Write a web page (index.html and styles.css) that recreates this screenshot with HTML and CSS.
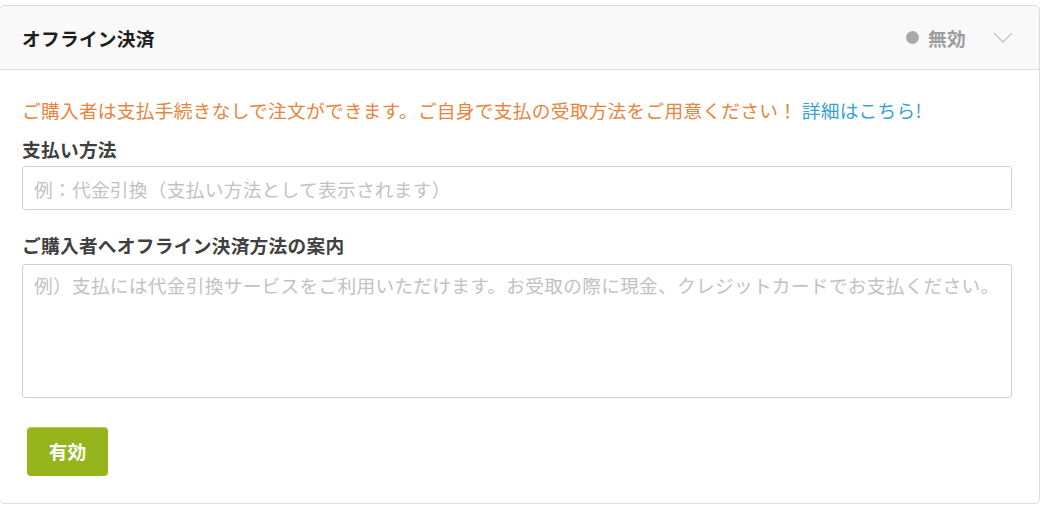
FILE: index.html
```html
<!DOCTYPE html>
<html lang="ja">
<head>
<meta charset="utf-8">
<link rel="stylesheet" href="styles.css">
</head>
<body>
<section class="card">
  <header class="card-head">
    <h2 class="card-title">オフライン決済</h2>
    <div class="status">
      <span class="dot"></span>
      <span class="status-text">無効</span>
      <svg class="chev" width="20" height="11" viewBox="0 0 20 11"><path d="M1 1 L10 10 L19 1" fill="none" stroke="#c4c4c4" stroke-width="1.3"/></svg>
    </div>
  </header>
  <div class="card-body">
    <p class="notice">ご購入者は支払手続きなしで注文ができます。ご自身で支払の受取方法をご用意ください！ <a class="link" href="#">詳細はこちら!</a></p>
    <label class="label">支払い方法</label>
    <input class="field" type="text" placeholder="例：代金引換（支払い方法として表示されます）">
    <label class="label label2">ご購入者へオフライン決済方法の案内</label>
    <textarea class="area" placeholder="例）支払には代金引換サービスをご利用いただけます。お受取の際に現金、クレジットカードでお支払ください。"></textarea>
    <button class="btn" type="button">有効</button>
  </div>
</section>
</body>
</html>
```
FILE: styles.css
```css
* { box-sizing: border-box; }
html, body { margin: 0; padding: 0; background: #fff; }
body {
  padding-top: 5px;
  font-family: "Noto Sans CJK JP", "Noto Sans", sans-serif;
  font-size: 18.7px;
  letter-spacing: 0.28px;
  color: #333;
}
.card {
  width: 1041px;
  margin-left: -1px;
  border: 1px solid #dcdcdc;
  border-radius: 5px;
  background: #fff;
}
.card-head {
  height: 64px;
  background: #f9f9f9;
  border-bottom: 1px solid #dedede;
  border-radius: 5px 5px 0 0;
  display: flex;
  align-items: center;
  justify-content: space-between;
  padding: 0 26px 0 22px;
}
.card-title {
  margin: 0;
  font-size: 18.7px;
  font-weight: 700;
  color: #1e1e1e;
  line-height: 24px;
}
.status {
  display: flex;
  align-items: center;
}
.dot {
  width: 13px;
  height: 13px;
  border-radius: 50%;
  background: #a9a9a9;
  margin-right: 9px;
}
.status-text {
  font-weight: 700;
  color: #9c9c9c;
  line-height: 24px;
}
.chev { margin-left: 27px; }
.card-body {
  padding: 28px 27px 27px 22px;
  display: flex;
  flex-direction: column;
  align-items: flex-start;
}
.notice {
  margin: 0;
  line-height: 24px;
  color: #e8843c;
  white-space: nowrap;
}
.link { color: #3ba2cf; text-decoration: none; }
.label {
  margin-top: 15px;
  line-height: 24px;
  font-weight: 700;
  color: #404040;
}
.label2 { margin-top: 23px; }
.field, .area {
  width: 990px;
  border: 1px solid #cfcfcf;
  border-radius: 3px;
  font-family: inherit;
  font-size: 18.7px;
  letter-spacing: 0.28px;
  color: #333;
  background: #fff;
  outline: none;
}
.field {
  height: 44px;
  margin-top: 5px;
  padding: 0 11px;
  line-height: 24px;
}
.area {
  height: 134px;
  margin-top: 7px;
  padding: 8px 6px 9px 11px;
  line-height: 24px;
  resize: none;
}
.field::placeholder, .area::placeholder { color: #c2c2c2; }
.btn {
  margin: 29px 0 0 5px;
  width: 81px;
  height: 49px;
  border: none;
  border-top: 1px solid #b2cb52;
  border-radius: 4px;
  background: #96b51c;
  color: #fff;
  font-family: inherit;
  font-size: 18.7px;
  font-weight: 700;
  padding: 0 0 4px;
}
```
